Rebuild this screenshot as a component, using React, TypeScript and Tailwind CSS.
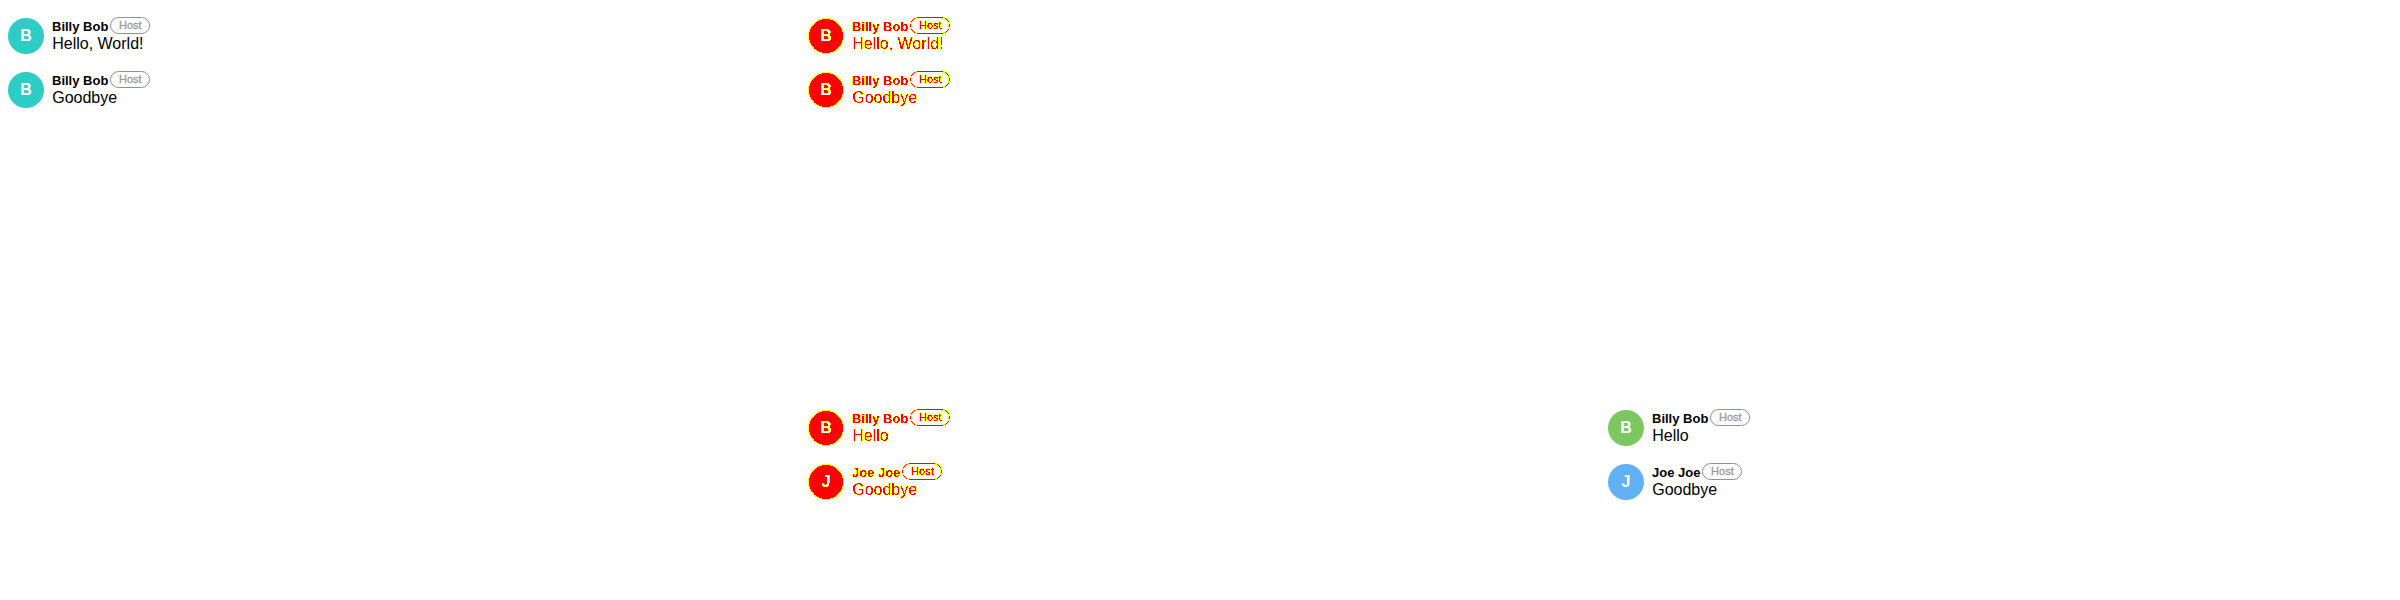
type Entry = { name: string; text: string; color: string };

function Message({ entry, diff }: { entry: Entry; diff?: boolean }) {
  const halo = diff ? '[text-shadow:0_0_1px_rgba(0,0,0,0.6)]' : '';
  return (
    <div className="flex h-[54px] items-start pt-[9px] pl-2">
      <div
        className={`flex size-9 shrink-0 items-center justify-center rounded-full text-base leading-none font-bold text-white ${diff ? 'border border-[#999] bg-black' : entry.color}`}
      >
        <span>{entry.name[0]}</span>
      </div>
      <div className={`-mt-px ml-2 flex flex-col text-black ${halo}`}>
        <div className="flex h-[17px] items-center">
          <span className="mt-0.5 text-[13px] leading-[17px] font-bold">{entry.name}</span>
          <span
            className={`ml-[1.5px] flex h-[17px] w-10 items-center justify-center rounded-full border pl-px text-[11px] leading-none ${diff ? 'border-black text-black [-webkit-text-stroke:0.3px_#000]' : 'border-[#909090] text-[#999] [-webkit-text-stroke:0.3px_#999]'}`}
          >
            Host
          </span>
        </div>
        <span className="mt-px ml-[0.2px] text-base leading-[18px]">{entry.text}</span>
      </div>
    </div>
  );
}

function Panel({ entries, diff, className }: { entries: Entry[]; diff?: boolean; className: string }) {
  return (
    <div className={`${className} bg-white ${diff ? '[filter:url(#diff-colors)]' : ''}`}>
      {entries.map((entry) => (
        <Message key={entry.text} entry={entry} diff={diff} />
      ))}
    </div>
  );
}

const before: Entry[] = [
  { name: 'Billy Bob', text: 'Hello, World!', color: 'bg-[#2dccc4]' },
  { name: 'Billy Bob', text: 'Goodbye', color: 'bg-[#2dccc4]' },
];

const after: Entry[] = [
  { name: 'Billy Bob', text: 'Hello', color: 'bg-[#7dc761]' },
  { name: 'Joe Joe', text: 'Goodbye', color: 'bg-[#62b1f2]' },
];

export default function App() {
  return (
    <div className="grid h-[600px] w-[2400px] grid-cols-3 bg-white font-['Liberation_Sans',Arial,sans-serif]">
      {/* Solid ink becomes red, partially covered edge pixels become yellow. */}
      <svg className="absolute size-0" aria-hidden="true">
        <filter id="diff-colors" x="0" y="0" width="100%" height="100%" colorInterpolationFilters="sRGB">
          <feComponentTransfer>
            <feFuncR type="linear" slope="0" intercept="1" />
            <feFuncG type="discrete" tableValues="0 0 0 1 1 1 1 1 1 1" />
            <feFuncB type="discrete" tableValues="0 0 0 0 0 0 0 0 0 1" />
          </feComponentTransfer>
        </filter>
      </svg>
      <Panel entries={before} className="pt-[9px]" />
      <div className="flex flex-col">
        <Panel entries={before} diff className="h-[392px] pt-[9px]" />
        <Panel entries={after} diff className="h-[208px] pt-[9px]" />
      </div>
      <Panel entries={after} className="pt-[401px]" />
    </div>
  );
}
